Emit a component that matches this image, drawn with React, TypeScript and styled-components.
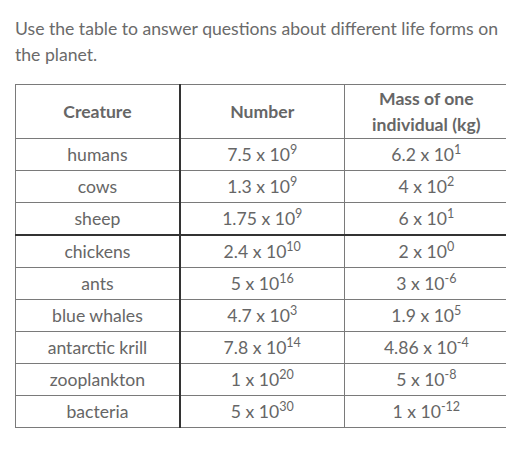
import React from 'react';
import styled, { createGlobalStyle } from 'styled-components';

const GlobalStyle = createGlobalStyle`
  body {
    margin: 0;
    background: #ffffff;
    font-family: Lato, "Open Sans", sans-serif;
    color: #666666;
  }
`;

const Page = styled.div`
  padding: 16px 0 0 15px;
  width: 506px;
  height: 474px;
  box-sizing: border-box;
  overflow: hidden;
`;

const Intro = styled.p`
  margin: 0 0 16px;
  font-size: 17.6px;
  line-height: 26px;
  color: #6a6a6a;
`;

const Table = styled.table`
  border-collapse: collapse;
  width: 494px;
  table-layout: fixed;
`;

interface CellProps {
  strongRight?: boolean;
  strongBottom?: boolean;
}

const HeadCell = styled.th<CellProps>`
  height: 53px;
  padding: 0 2px;
  font-family: Lato, "Open Sans", sans-serif;
  font-size: 17.6px;
  font-weight: 700;
  color: #666666;
  line-height: 26px;
  text-align: center;
  border: 1px solid #7a7a7a;
  border-right: ${(p) => (p.strongRight ? '2px solid #333' : '1px solid #7a7a7a')};
`;

const Cell = styled.td<CellProps>`
  height: 31px;
  padding: 0;
  font-family: Lato, "Open Sans", sans-serif;
  font-size: 17.6px;
  color: #666666;
  text-align: center;
  line-height: 20px;
  border: 1px solid #7a7a7a;
  border-right: ${(p) => (p.strongRight ? '2px solid #333' : '1px solid #7a7a7a')};
  border-bottom: ${(p) => (p.strongBottom ? '2px solid #333' : '1px solid #7a7a7a')};
`;

const Sup = styled.sup`
  font-size: 12.5px;
  line-height: 0;
  vertical-align: 7px;
`;

interface Row {
  creature: string;
  number: [string, string];
  mass: [string, string];
}

const rows: Row[] = [
  { creature: 'humans', number: ['7.5', '9'], mass: ['6.2', '1'] },
  { creature: 'cows', number: ['1.3', '9'], mass: ['4', '2'] },
  { creature: 'sheep', number: ['1.75', '9'], mass: ['6', '1'] },
  { creature: 'chickens', number: ['2.4', '10'], mass: ['2', '0'] },
  { creature: 'ants', number: ['5', '16'], mass: ['3', '-6'] },
  { creature: 'blue whales', number: ['4.7', '3'], mass: ['1.9', '5'] },
  { creature: 'antarctic krill', number: ['7.8', '14'], mass: ['4.86', '-4'] },
  { creature: 'zooplankton', number: ['1', '20'], mass: ['5', '-8'] },
  { creature: 'bacteria', number: ['5', '30'], mass: ['1', '-12'] },
];

function Sci({ value }: { value: [string, string] }): JSX.Element {
  return (
    <>
      {value[0]} x 10<Sup>{value[1]}</Sup>
    </>
  );
}

export default function App(): JSX.Element {
  return (
    <Page>
      <GlobalStyle />
      <Intro>
        Use the table to answer questions about different life forms on the
        planet.
      </Intro>
      <Table>
        <thead>
          <tr>
            <HeadCell strongRight>Creature</HeadCell>
            <HeadCell>Number</HeadCell>
            <HeadCell>
              Mass of one
              <br />
              individual (kg)
            </HeadCell>
          </tr>
        </thead>
        <tbody>
          {rows.map((row) => {
            const strong = row.creature === 'sheep';
            return (
              <tr key={row.creature}>
                <Cell strongRight strongBottom={strong}>
                  {row.creature}
                </Cell>
                <Cell strongBottom={strong}>
                  <Sci value={row.number} />
                </Cell>
                <Cell strongBottom={strong}>
                  <Sci value={row.mass} />
                </Cell>
              </tr>
            );
          })}
        </tbody>
      </Table>
    </Page>
  );
}
